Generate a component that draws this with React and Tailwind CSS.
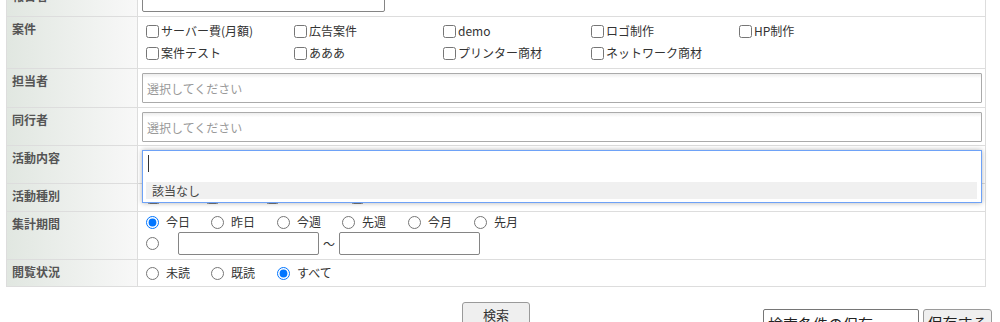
import React from 'react';

function Row({ label, className, first, children }) {
  return (
    <div className={`flex ${first ? '' : 'border-t border-[#dddddd]'} ${className}`}>
      <div className="w-[131px] shrink-0 border-r border-[#dddddd] bg-linear-to-r from-[#e1e7e1] to-[#f8f8f8] pl-[5px] pt-[3px] text-[12px] leading-[18px] font-bold text-[#555555]">
        {label}
      </div>
      <div className="relative min-w-0 flex-1 pl-[4px] pr-[3px]">{children}</div>
    </div>
  );
}

const Check = ({ label, textClass = '' }) => (
  <label className="flex items-center whitespace-nowrap">
    <input type="checkbox" className="m-0 ml-[4px] h-[13px] w-[13px]" />
    <span className={`ml-[2px] ${textClass}`}>{label}</span>
  </label>
);

const Radio = ({ label, name, checked, className }) => (
  <label className={`flex items-center whitespace-nowrap ${className}`}>
    <input type="radio" name={name} defaultChecked={checked} className="m-0 h-[13px] w-[13px]" />
    <span className="ml-[7px]">{label}</span>
  </label>
);

const SelectBox = () => (
  <div className="flex h-[30px] items-center rounded-[1px] border border-[#aaaaaa] bg-[linear-gradient(#eeeeee_1%,#ffffff_15%)] pl-[4px] pt-[2px] text-[12px] text-[#999999]">
    選択してください
  </div>
);

export default function App() {
  return (
    <div className="h-[322px] w-[1000px] overflow-hidden bg-white font-['Noto_Sans_CJK_JP',sans-serif] text-[12px] text-[#333333]">
      <div className="-mt-[17px] ml-[6px] w-[980px] border border-[#dddddd]">
        <Row label="報告者" className="h-[32px]" first>
          <div className="pt-[5px]">
            <div className="h-[23px] w-[243px] rounded-[2px] border border-[#858585] bg-white" />
          </div>
        </Row>

        <Row label="案件" className="h-[52px]">
          <div className="pt-[3px]">
            <div className="grid h-[22px] grid-cols-[148px_149px_148px_148px_auto] items-center">
              <Check label="サーバー費(月額)" />
              <Check label="広告案件" />
              <Check label="demo" />
              <Check label="ロゴ制作" />
              <Check label="HP制作" />
            </div>
            <div className="grid h-[22px] grid-cols-[148px_149px_148px_148px_auto] items-center">
              <Check label="案件テスト" />
              <Check label="あああ" />
              <Check label="プリンター商材" />
              <Check label="ネットワーク商材" />
            </div>
          </div>
        </Row>

        <Row label="担当者" className="h-[39px]">
          <div className="pt-[4px]">
            <SelectBox />
          </div>
        </Row>

        <Row label="同行者" className="h-[38px]">
          <div className="pt-[4px]">
            <SelectBox />
          </div>
        </Row>

        <Row label="活動内容" className="h-[38px]">
          <div className="pt-[4px]">
            <div className="relative h-[30px]">
              <div className="absolute left-0 right-0 top-0 z-10 flex h-[53px] flex-col border border-[#6ea2f7] bg-white shadow-[0_0_5px_rgba(0,0,0,0.3)]">
                <div className="h-[31px] pl-[5px] pt-[4px]">
                  <div className="h-[17px] w-[1px] bg-[#333333]" />
                </div>
                <div className="ml-[3px] mr-[4px] h-[17px] bg-[#f0f0f0] pl-[6px] text-[12px] leading-[17px] text-[#444444]">
                  該当なし
                </div>
              </div>
            </div>
          </div>
        </Row>

        <Row label="活動種別" className="h-[28px]">
          <div className="grid h-full grid-cols-[59px_60px_85px_auto] items-center pl-[1px]">
            <Check label="訪問" textClass="pb-[5px]" />
            <Check label="電話" textClass="pb-[5px]" />
            <Check label="来社対応" textClass="pb-[5px]" />
            <Check label="その他" textClass="pb-[5px]" />
          </div>
        </Row>

        <Row label="集計期間" className="h-[48px]">
          <div className="flex h-[20px] items-center pl-[4px]">
            <Radio name="period" label="今日" checked className="w-[65px]" />
            <Radio name="period" label="昨日" className="w-[66px]" />
            <Radio name="period" label="今週" className="w-[65px]" />
            <Radio name="period" label="先週" className="w-[66px]" />
            <Radio name="period" label="今月" className="w-[66px]" />
            <Radio name="period" label="先月" className="w-[66px]" />
          </div>
          <div className="flex h-[23px] items-center pl-[4px]">
            <input type="radio" name="period" className="m-0 h-[13px] w-[13px]" />
            <div className="ml-[19px] h-[23px] w-[141px] rounded-[2px] border border-[#858585]" />
            <span className="mx-[4px] text-[12px]">〜</span>
            <div className="h-[23px] w-[141px] rounded-[2px] border border-[#858585]" />
          </div>
        </Row>

        <Row label="閲覧状況" className="h-[27px]">
          <div className="flex h-full items-center pl-[4px]">
            <Radio name="read" label="未読" className="w-[65px]" />
            <Radio name="read" label="既読" className="w-[66px]" />
            <Radio name="read" label="すべて" checked className="w-[66px]" />
          </div>
        </Row>
      </div>

      <div className="mt-[15px] grid w-[992px] grid-cols-[1fr_auto_1fr] items-start">
        <div />
        <button className="h-[26px] w-[68px] rounded-[3px] border border-[#9a9a9a] bg-[#efefef] text-[13px] text-[#333333]">
          検索
        </button>
        <div className="mt-[7px] flex justify-end gap-[4px]">
          <input
            readOnly
            value="検索条件の保存"
            className="h-[28px] w-[156px] rounded-[2px] border border-[#767676] px-[4px] text-[15px] text-[#222222] outline-none"
          />
          <button className="h-[28px] w-[69px] rounded-[3px] border border-[#9a9a9a] bg-[#efefef] text-[15px] text-[#222222]">
            保存する
          </button>
        </div>
      </div>
    </div>
  );
}
